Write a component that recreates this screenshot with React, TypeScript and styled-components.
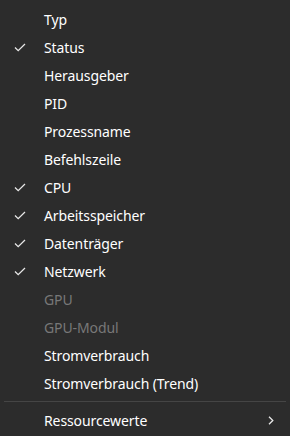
import styled, { createGlobalStyle } from 'styled-components';

const GlobalStyle = createGlobalStyle`
  html, body {
    margin: 0;
    padding: 0;
    background: #2c2c2c;
  }
`;

const Menu = styled.div`
  width: 290px;
  height: 436px;
  box-sizing: border-box;
  background: #2c2c2c;
  padding: 5px 4px 0;
  font-family: "Noto Sans", "Open Sans", sans-serif;
  font-size: 14px;
  color: #ffffff;
`;

const Item = styled.div<{ $disabled?: boolean }>`
  display: grid;
  grid-template-columns: 40px 1fr 18px;
  align-items: center;
  height: 28px;
  color: ${(p) => (p.$disabled ? '#787878' : '#ffffff')};
`;

const Check = styled.span`
  display: flex;
  justify-content: center;
  padding-right: 8px;
`;

const Label = styled.span`
  white-space: nowrap;
  letter-spacing: -0.1px;
`;

const Arrow = styled.span`
  display: flex;
  align-items: center;
`;

const Separator = styled.div`
  height: 1px;
  background: #454545;
  margin: 4px 0;
`;

const CheckIcon = () => (
  <svg width="12" height="9" viewBox="0 0 12 9">
    <path d="M1 4.5 L4.2 7.6 L11 1" fill="none" stroke="#e8e8e8" strokeWidth="1.3" />
  </svg>
);

const ChevronIcon = () => (
  <svg width="6" height="9" viewBox="0 0 6 9">
    <path d="M1 0.8 L4.8 4.5 L1 8.2" fill="none" stroke="#e8e8e8" strokeWidth="1.3" />
  </svg>
);

const columns = [
  { label: 'Typ' },
  { label: 'Status', checked: true },
  { label: 'Herausgeber' },
  { label: 'PID' },
  { label: 'Prozessname' },
  { label: 'Befehlszeile' },
  { label: 'CPU', checked: true },
  { label: 'Arbeitsspeicher', checked: true },
  { label: 'Datenträger', checked: true },
  { label: 'Netzwerk', checked: true },
  { label: 'GPU', disabled: true },
  { label: 'GPU-Modul', disabled: true },
  { label: 'Stromverbrauch' },
  { label: 'Stromverbrauch (Trend)' },
];

export default function App() {
  return (
    <>
      <GlobalStyle />
      <Menu>
        {columns.map((c) => (
          <Item key={c.label} $disabled={c.disabled}>
            <Check>{c.checked && <CheckIcon />}</Check>
            <Label>{c.label}</Label>
            <span />
          </Item>
        ))}
        <Separator />
        <Item>
          <span />
          <Label>Ressourcewerte</Label>
          <Arrow>
            <ChevronIcon />
          </Arrow>
        </Item>
      </Menu>
    </>
  );
}
